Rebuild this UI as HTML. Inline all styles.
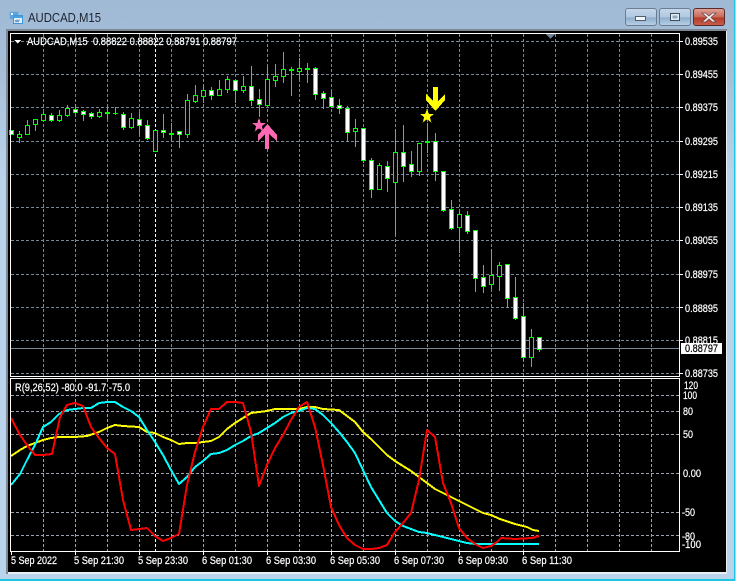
<!DOCTYPE html>
<html><head><meta charset="utf-8"><title>AUDCAD,M15</title>
<style>
html,body{margin:0;padding:0;background:#fff}
body{width:737px;height:581px;overflow:hidden;position:relative;font-family:"Liberation Sans",sans-serif}
svg{position:absolute;left:0;top:0;display:block}
text{font-family:"Liberation Sans",sans-serif;font-size:11px;fill:#fff;stroke:#fff;stroke-width:.22px}
.c{shape-rendering:crispEdges}
</style></head><body>
<svg width="737" height="581" viewBox="0 0 737 581">
<defs>
<linearGradient id="t" x1="0" y1="0" x2="0" y2="1"><stop offset="0" stop-color="#a0b9d4"/><stop offset=".12" stop-color="#a6bfd9"/><stop offset=".3" stop-color="#bad3ec"/><stop offset="1" stop-color="#bad3ec"/></linearGradient>
<linearGradient id="b" x1="0" y1="0" x2="0" y2="1"><stop offset="0" stop-color="#c6d8ea"/><stop offset=".5" stop-color="#b0c8e0"/><stop offset=".55" stop-color="#8fadcb"/><stop offset="1" stop-color="#b9d2e8"/></linearGradient>
<linearGradient id="r" x1="0" y1="0" x2="0" y2="1"><stop offset="0" stop-color="#dfa49a"/><stop offset=".5" stop-color="#c9695a"/><stop offset=".55" stop-color="#b53a28"/><stop offset="1" stop-color="#c9604c"/></linearGradient>
</defs>
<rect width="737" height="581" fill="url(#t)"/>
<rect x="0" y="579" width="737" height="2" fill="#1fc6e4"/>
<rect x="734" y="0" width="1.500" height="581" fill="#1fc6e4"/>
<rect x="735.500" y="0" width="2" height="581" fill="#fff"/>
<rect x="6" y="29" width="721" height="545" fill="#e8eef4"/>
<rect x="6" y="29" width="721" height="2" fill="#7d8894"/>
<rect x="6" y="29" width="2" height="545" fill="#7d8894"/>
<rect x="8" y="31" width="718" height="541" fill="#000"/>

<!-- title -->
<g class="c"><rect x="9.500" y="11.500" width="9" height="8" fill="#5aa6e0" stroke="#8fb8dc"/><rect x="13.500" y="15.500" width="9" height="8" fill="#e8f3fb" stroke="#3f96d8"/><rect x="14" y="16" width="8" height="2" fill="#4aa0e0"/><rect x="11" y="13" width="2" height="2" fill="#fff"/></g>
<path d="M15 20l1 2 1-2 1 2 1-2 1 0" fill="none" stroke="#3a78b8" stroke-width=".8"/>
<text x="28" y="22" textLength="73" lengthAdjust="spacingAndGlyphs" style="font-size:12.500px;fill:#1c2430;stroke:none">AUDCAD,M15</text>

<!-- window buttons -->
<rect x="625.500" y="8.500" width="31" height="17" rx="2.500" fill="url(#b)" stroke="#6b7d92"/>
<rect x="659.500" y="8.500" width="31" height="17" rx="2.500" fill="url(#b)" stroke="#6b7d92"/>
<rect x="693.500" y="8.500" width="31" height="17" rx="2.500" fill="url(#r)" stroke="#5c2a2a"/>
<rect x="635.500" y="16.500" width="10" height="4" fill="#f4f7fa" stroke="#4f5f72" class="c"/>
<rect x="670.500" y="13.500" width="9" height="7" fill="#e4ecf4" stroke="#3e4e60" class="c"/>
<rect x="672.500" y="15.500" width="5" height="3" fill="#8fa8c4" class="c"/>
<path d="M705.500 13l3.500 3 3.500-3h3.500l-5 4.500 5 4.500h-3.500l-3.500-3-3.500 3H702l5-4.500-5-4.500z" fill="#f2f2f2" stroke="#6c4a48" stroke-width=".8"/>

<!-- grid main -->
<g class="c" fill="none" stroke="#778899" stroke-width="1" stroke-dasharray="3 2">
<path d="M11 41.500H679M11 74.500H679M11 107.500H679M11 141.500H679M11 174.500H679M11 207.500H679M11 240.500H679M11 274.500H679M11 307.500H679M11 340.500H679M11 373.500H679"/>
<path d="M43.500 34V376M75.500 34V376M107.500 34V376M139.500 34V376M171.500 34V376M203.500 34V376M235.500 34V376M267.500 34V376M299.500 34V376M331.500 34V376M363.500 34V376M395.500 34V376M427.500 34V376M459.500 34V376M491.500 34V376M523.500 34V376M555.500 34V376M587.500 34V376M619.500 34V376M651.500 34V376"/>
</g>
<path class="c" d="M155.500 34V376" stroke="#fff" stroke-dasharray="3 2" fill="none"/>
<!-- grid sub -->
<g class="c" fill="none" stroke="#9aa3ad" stroke-width="1" stroke-dasharray="3 2">
<path d="M11 395.500H679M11 411.500H679M11 434.500H679M11 473.500H679M11 512.500H679M11 535.500H679"/>
<path d="M43.500 379V551M75.500 379V551M107.500 379V551M139.500 379V551M171.500 379V551M203.500 379V551M235.500 379V551M267.500 379V551M299.500 379V551M331.500 379V551M363.500 379V551M395.500 379V551M427.500 379V551M459.500 379V551M491.500 379V551M523.500 379V551M555.500 379V551M587.500 379V551M619.500 379V551M651.500 379V551"/>
</g>
<path class="c" d="M155.500 379V551" stroke="#fff" stroke-dasharray="3 2" fill="none"/>

<!-- bid line -->
<rect x="11" y="348" width="669" height="1" fill="#778899" class="c"/>

<!-- wicks -->
<path class="c" stroke="#0f0" fill="none" d="M19.500 131V143M27.500 120V135M35.500 119V131M43.500 112V121M51.500 113V122M59.500 110V122M67.500 105V117M75.500 104V114M83.500 110V121M91.500 112V119M99.500 109V118M107.500 107V119M115.500 107V115M123.500 112V130M131.500 113V129M139.500 112V134M147.500 120V140M155.500 130V152M163.500 114V138M171.500 123V141M179.500 131V148M187.500 94V138M195.500 85V103M203.500 85V103M211.500 87V100M219.500 80V96M227.500 76V93M235.500 80V103M243.500 76V93M251.500 66V106M259.500 89V117M267.500 67V106M275.500 64V87M283.500 52V83M291.500 67V96M299.500 58V79M307.500 63V83M315.500 67V100M323.500 91V109M331.500 91V108M339.500 99V114M347.500 106V142M355.500 119V147M363.500 128V163M371.500 158V198M379.500 163V190M387.500 161V192M395.500 129V235M403.500 125V182M411.500 151V177M419.500 143V176M427.500 123V153M435.500 133V181M443.500 171V212M451.500 200V230M459.500 211V253M467.500 211V234M475.500 230V292M483.500 265V293M491.500 249V289M499.500 262V291M507.500 264V308M515.500 277V320M523.500 303V361M531.500 329V367M539.500 337V352"/>
<!-- hollow bodies -->
<g class="c" stroke="#0f0" fill="#000">
<rect x="17.500" y="134.500" width="4" height="3"/><rect x="25.500" y="125.500" width="4" height="9"/><rect x="33.500" y="119.500" width="4" height="5"/><rect x="41.500" y="114.500" width="4" height="6"/><rect x="57.500" y="115.500" width="4" height="5"/><rect x="65.500" y="108.500" width="4" height="7"/><rect x="97.500" y="112.500" width="4" height="4"/><rect x="129.500" y="118.500" width="4" height="9"/><rect x="153.500" y="130.500" width="4" height="21"/><rect x="185.500" y="100.500" width="4" height="34"/><rect x="193.500" y="95.500" width="4" height="6"/><rect x="201.500" y="90.500" width="4" height="6"/><rect x="217.500" y="89.500" width="4" height="6"/><rect x="225.500" y="79.500" width="4" height="10"/><rect x="241.500" y="86.500" width="4" height="4"/><rect x="265.500" y="79.500" width="4" height="26"/><rect x="273.500" y="76.500" width="4" height="4"/><rect x="281.500" y="69.500" width="4" height="7"/><rect x="297.500" y="68.500" width="4" height="3"/><rect x="353.500" y="128.500" width="4" height="3"/><rect x="377.500" y="165.500" width="4" height="24"/><rect x="393.500" y="152.500" width="4" height="30"/><rect x="417.500" y="143.500" width="4" height="28"/><rect x="457.500" y="214.500" width="4" height="13"/><rect x="489.500" y="275.500" width="4" height="9"/><rect x="497.500" y="265.500" width="4" height="11"/><rect x="529.500" y="337.500" width="4" height="20"/>
</g>
<!-- filled bodies -->
<g class="c" stroke="#0f0" fill="#fff">
<rect x="9.500" y="130.500" width="4" height="4"/><rect x="49.500" y="115.500" width="4" height="5"/><rect x="73.500" y="109.500" width="4" height="3"/><rect x="81.500" y="111.500" width="4" height="3"/><rect x="89.500" y="113.500" width="4" height="3"/><rect x="121.500" y="114.500" width="4" height="13"/><rect x="137.500" y="119.500" width="4" height="6"/><rect x="145.500" y="125.500" width="4" height="13"/><rect x="161.500" y="130.500" width="4" height="2"/><rect x="177.500" y="131.500" width="4" height="3"/><rect x="209.500" y="90.500" width="4" height="5"/><rect x="233.500" y="80.500" width="4" height="10"/><rect x="249.500" y="86.500" width="4" height="14"/><rect x="257.500" y="99.500" width="4" height="5"/><rect x="313.500" y="68.500" width="4" height="26"/><rect x="321.500" y="93.500" width="4" height="5"/><rect x="329.500" y="97.500" width="4" height="9"/><rect x="337.500" y="105.500" width="4" height="3"/><rect x="345.500" y="108.500" width="4" height="24"/><rect x="361.500" y="128.500" width="4" height="32"/><rect x="369.500" y="160.500" width="4" height="29"/><rect x="385.500" y="166.500" width="4" height="12"/><rect x="401.500" y="152.500" width="4" height="14"/><rect x="409.500" y="164.500" width="4" height="7"/><rect x="433.500" y="141.500" width="4" height="30"/><rect x="441.500" y="171.500" width="4" height="39"/><rect x="449.500" y="209.500" width="4" height="19"/><rect x="465.500" y="215.500" width="4" height="16"/><rect x="473.500" y="230.500" width="4" height="48"/><rect x="481.500" y="277.500" width="4" height="9"/><rect x="505.500" y="264.500" width="4" height="34"/><rect x="513.500" y="297.500" width="4" height="21"/><rect x="521.500" y="316.500" width="4" height="41"/><rect x="537.500" y="337.500" width="4" height="12"/>
</g>
<!-- doji dashes -->
<g class="c" fill="#0f0">
<rect x="105" y="112" width="5" height="2"/><rect x="113" y="113" width="5" height="1"/><rect x="169" y="133" width="5" height="2"/><rect x="289" y="69" width="5" height="2"/><rect x="305" y="68" width="5" height="2"/><rect x="425" y="141" width="5" height="2"/>
</g>

<!-- arrows / stars -->
<g class="c">
<path d="M259 118l1.800 5H266l-4.200 3.200 1.600 5.300-4.400-3.200-4.400 3.200 1.600-5.300-4.200-3.200h5.200z" fill="#ff69b4"/>
<path d="M267.500 124L277 135v6l-8-7v15h-4V134l-7 7v-6z" fill="#ff69b4"/>
<path d="M427 109l1.900 5H434l-4.200 3.200 1.600 5.300-4.400-3.200-4.400 3.200 1.600-5.300-4.200-3.200h5.100z" fill="#ff0"/>
<path d="M433 87h5v14l7-7v6l-9.500 11L426 100v-6l7 7z" fill="#ff0"/>
</g>

<!-- small markers -->
<path class="c" d="M546 34h9l-4.500 5z" fill="#6f8296"/>
<path class="c" d="M14 40h7l-3.500 3.500z" fill="#fff"/>

<!-- indicator lines -->
<g fill="none" stroke-width="2" stroke-linejoin="round" class="c">
<polyline stroke="#ffff00" points="11,456 20,450 27,446 35,443 43,440 51,438 59,437 67,437 75,437 87,436 99,432 107,428 115,425 123,426 139,427 147,432 155,433 163,437 171,440 179,444 187,443 195,443 203,442 211,441 219,437 227,429 235,423 243,418 251,413 259,412 267,411 275,409 299,409 307,407 315,407 323,409 339,410 347,416 355,422 363,432 371,439 379,447 387,455 395,461 403,466 411,471 419,477 427,483 435,489 443,493 451,497 459,501 467,505 475,509 483,513 491,515 500,519 515,524 527,527 533,530 539,531"/>
<polyline stroke="#00ffff" points="11,485 20,474 27,460 35,445 43,427 51,422 59,414 67,410 75,409 83,408 91,408 99,403 107,402 115,402 123,407 131,411 139,417 147,430 155,442 163,455 171,470 179,484 187,477 195,467 203,461 211,454 219,453 227,450 235,445 243,441 251,436 259,433 267,428 275,423 283,417 291,413 299,411 307,408 315,409 323,415 331,423 339,432 347,442 355,453 363,470 371,487 379,500 387,513 395,521 403,526 411,529 419,532 427,533 435,535 443,537 451,539 459,541 467,543 475,544 539,544"/>
<polyline stroke="#ff0000" points="11,418 20,435 27,445 35,455 43,455 52,454 60,417 67,405 75,403 83,406 91,427 99,438 107,448 115,454 123,500 131,530 139,529 147,528 155,536 163,541 171,538 179,534 187,485 195,452 203,427 211,409 219,409 227,402 235,402 243,403 251,432 259,486 267,465 275,448 283,435 291,420 299,407 307,402 315,427 323,465 331,507 339,525 347,538 355,545 363,549 371,549 379,548 387,545 395,532 403,523 411,513 419,480 427,430 435,437 443,483 451,503 459,528 467,538 475,544 483,548 491,546 497,542 501,538 515,539 532,538 539,536"/>
</g>

<!-- frames -->
<g class="c" fill="none" stroke="#fff">
<rect x="10.500" y="33.500" width="669" height="343"/>
<rect x="10.500" y="378.500" width="669" height="173"/>
<path d="M680 41.500h3M680 74.500h3M680 107.500h3M680 141.500h3M680 174.500h3M680 207.500h3M680 240.500h3M680 274.500h3M680 307.500h3M680 340.500h3M680 373.500h3"/>
<path d="M11.500 552v3M75.500 552v3M139.500 552v3M203.500 552v3M267.500 552v3M331.500 552v3M395.500 552v3M459.500 552v3M523.500 552v3"/>
</g>

<!-- chart texts -->
<text x="27" y="45" textLength="210" lengthAdjust="spacingAndGlyphs" xml:space="preserve">AUDCAD,M15  0.88822 0.88822 0.88791 0.88797</text>
<g>
<text x="685" y="45" textLength="33" lengthAdjust="spacingAndGlyphs">0.89535</text>
<text x="685" y="78" textLength="33" lengthAdjust="spacingAndGlyphs">0.89455</text>
<text x="685" y="111" textLength="33" lengthAdjust="spacingAndGlyphs">0.89375</text>
<text x="685" y="145" textLength="33" lengthAdjust="spacingAndGlyphs">0.89295</text>
<text x="685" y="178" textLength="33" lengthAdjust="spacingAndGlyphs">0.89215</text>
<text x="685" y="211" textLength="33" lengthAdjust="spacingAndGlyphs">0.89135</text>
<text x="685" y="244" textLength="33" lengthAdjust="spacingAndGlyphs">0.89055</text>
<text x="685" y="278" textLength="33" lengthAdjust="spacingAndGlyphs">0.88975</text>
<text x="685" y="312" textLength="33" lengthAdjust="spacingAndGlyphs">0.88895</text>
<text x="685" y="344" textLength="33" lengthAdjust="spacingAndGlyphs">0.88815</text>
<text x="685" y="377" textLength="33" lengthAdjust="spacingAndGlyphs">0.88735</text>
</g>
<rect x="681" y="343" width="41" height="11" fill="#fff" class="c"/>
<text x="685" y="352" textLength="33" lengthAdjust="spacingAndGlyphs" style="fill:#000;stroke:#000">0.88797</text>

<text x="15" y="391" textLength="115" lengthAdjust="spacingAndGlyphs">R(9,26,52) -80.0 -91.7 -75.0</text>
<g>
<text x="684" y="389" textLength="14" lengthAdjust="spacingAndGlyphs">120</text>
<text x="683" y="399" textLength="14" lengthAdjust="spacingAndGlyphs">100</text>
<text x="683" y="415" textLength="10" lengthAdjust="spacingAndGlyphs">80</text>
<text x="683" y="438" textLength="10" lengthAdjust="spacingAndGlyphs">50</text>
<text x="683" y="477" textLength="18" lengthAdjust="spacingAndGlyphs">0.00</text>
<text x="682" y="516" textLength="13" lengthAdjust="spacingAndGlyphs">-50</text>
<text x="682" y="540" textLength="13" lengthAdjust="spacingAndGlyphs">-80</text>
<text x="682" y="548" textLength="19" lengthAdjust="spacingAndGlyphs">-100</text>
</g>
<g>
<text x="11" y="564" textLength="46" lengthAdjust="spacingAndGlyphs">5 Sep 2022</text>
<text x="74" y="564" textLength="50" lengthAdjust="spacingAndGlyphs">5 Sep 21:30</text>
<text x="138" y="564" textLength="50" lengthAdjust="spacingAndGlyphs">5 Sep 23:30</text>
<text x="202" y="564" textLength="50" lengthAdjust="spacingAndGlyphs">6 Sep 01:30</text>
<text x="266" y="564" textLength="50" lengthAdjust="spacingAndGlyphs">6 Sep 03:30</text>
<text x="330" y="564" textLength="50" lengthAdjust="spacingAndGlyphs">6 Sep 05:30</text>
<text x="394" y="564" textLength="50" lengthAdjust="spacingAndGlyphs">6 Sep 07:30</text>
<text x="458" y="564" textLength="50" lengthAdjust="spacingAndGlyphs">6 Sep 09:30</text>
<text x="522" y="564" textLength="50" lengthAdjust="spacingAndGlyphs">6 Sep 11:30</text>
</g>
</svg>
</body></html>
